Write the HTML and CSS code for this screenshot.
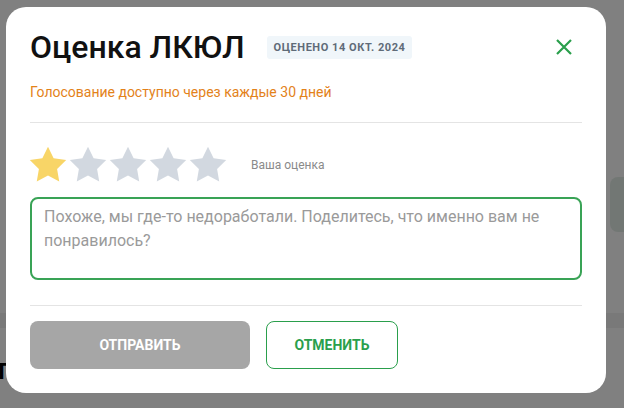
FILE: index.html
```html
<!DOCTYPE html>
<html lang="ru">
<head>
  <meta charset="UTF-8" />
  <meta name="viewport" content="width=device-width, initial-scale=1.0"/>
  <title>Оценка ЛКЮЛ</title>
  <link rel="stylesheet" href="styles.css">
</head>
<body>

  <!-- страница под оверлеем -->
  <div class="backdrop-band"></div>
  <div class="backdrop-card"></div>
  <div class="backdrop-text">т</div>

  <div class="modal">
    <div class="modal-head">
      <h1 class="modal-title">Оценка ЛКЮЛ</h1>
      <span class="badge">Оценено 14 окт. 2024</span>
      <button class="close-btn" aria-label="Закрыть">
        <svg width="18" height="18" viewBox="0 0 18 18">
          <path d="M2 2L16 16M16 2L2 16" stroke="#2a9f4c" stroke-width="2.2" fill="none"/>
        </svg>
      </button>
    </div>

    <p class="notice">Голосование доступно через каждые 30 дней</p>

    <hr class="divider">

    <div class="rating">
      <div class="stars">
        <svg class="star on" viewBox="1 1 22 22"><path d="M12 2l3.09 6.26L22 9.27l-5 4.87 1.18 6.88L12 17.77l-6.18 3.25L7 14.14 2 9.27l6.91-1.01L12 2z"/></svg>
        <svg class="star" viewBox="1 1 22 22"><path d="M12 2l3.09 6.26L22 9.27l-5 4.87 1.18 6.88L12 17.77l-6.18 3.25L7 14.14 2 9.27l6.91-1.01L12 2z"/></svg>
        <svg class="star" viewBox="1 1 22 22"><path d="M12 2l3.09 6.26L22 9.27l-5 4.87 1.18 6.88L12 17.77l-6.18 3.25L7 14.14 2 9.27l6.91-1.01L12 2z"/></svg>
        <svg class="star" viewBox="1 1 22 22"><path d="M12 2l3.09 6.26L22 9.27l-5 4.87 1.18 6.88L12 17.77l-6.18 3.25L7 14.14 2 9.27l6.91-1.01L12 2z"/></svg>
        <svg class="star" viewBox="1 1 22 22"><path d="M12 2l3.09 6.26L22 9.27l-5 4.87 1.18 6.88L12 17.77l-6.18 3.25L7 14.14 2 9.27l6.91-1.01L12 2z"/></svg>
      </div>
      <span class="rating-label">Ваша оценка</span>
    </div>

    <textarea class="comment" placeholder="Похоже, мы где-то недоработали. Поделитесь, что именно вам не понравилось?"></textarea>

    <hr class="divider bottom">

    <div class="actions">
      <button class="btn btn-send" disabled>Отправить</button>
      <button class="btn btn-cancel">Отменить</button>
    </div>
  </div>

</body>
</html>
```

FILE: styles.css
```css
body {
  margin: 0;
  height: 408px;
  overflow: hidden;
  position: relative;
  background: #808080;
  font-family: Roboto, 'Liberation Sans', sans-serif;
  padding: 7px 0 0 6px;
  box-sizing: border-box;
}

.backdrop-band {
  position: absolute;
  left: 0;
  right: 0;
  top: 313px;
  height: 15px;
  background: #797979;
}

.backdrop-card {
  position: absolute;
  left: 610px;
  top: 177px;
  width: 40px;
  height: 55px;
  border-radius: 8px;
  background: #727774;
}

.backdrop-text {
  position: absolute;
  left: -6px;
  top: 354px;
  font-size: 30px;
  line-height: 30px;
  font-weight: 500;
  color: #000;
}

.modal {
  position: relative;
  width: 600px;
  height: 386px;
  box-sizing: border-box;
  background: #fff;
  border-radius: 20px;
  padding: 20px 24px 24px;
}

.modal-head {
  display: flex;
  align-items: center;
  height: 40px;
}

.modal-title {
  margin: 0;
  font-size: 32px;
  font-weight: 500;
  color: #111;
  line-height: 40px;
}

.badge {
  margin-left: 22px;
  background: #f0f6fa;
  color: #5f6b78;
  font-size: 11px;
  font-weight: 700;
  letter-spacing: 0.55px;
  text-transform: uppercase;
  padding: 5px 7px;
  line-height: 13px;
  border-radius: 3px;
}

.close-btn {
  margin-left: auto;
  margin-right: 9px;
  background: none;
  border: none;
  padding: 0;
  width: 18px;
  height: 18px;
  cursor: pointer;
}

.notice {
  margin: 15px 0 0;
  font-size: 14px;
  line-height: 20px;
  color: #e3821a;
}

.divider {
  margin: 20px 0 0;
  border: none;
  border-top: 1px solid #e4e4e4;
}

.rating {
  display: flex;
  align-items: center;
  margin-top: 22px;
}

.stars {
  display: flex;
  margin-left: -2px;
}

.star {
  width: 40px;
  height: 40px;
  fill: #d2d8e0;
}

.star.on {
  fill: #f8d567;
}

.rating-label {
  margin-left: 23px;
  font-size: 12px;
  color: #8a8a8a;
}

.comment {
  display: block;
  margin-top: 12px;
  width: 100%;
  height: 83px;
  box-sizing: border-box;
  border: 2px solid #39a356;
  border-radius: 8px;
  padding: 6px 12px;
  font-family: Roboto, 'Liberation Sans', sans-serif;
  font-size: 16px;
  line-height: 24px;
  resize: none;
  outline: none;
}

.comment::placeholder {
  color: #9a9a9a;
}

.divider.bottom {
  margin-top: 25px;
}

.actions {
  display: flex;
  gap: 16px;
  margin-top: 15px;
}

.btn {
  height: 48px;
  border-radius: 8px;
  font-family: Roboto, 'Liberation Sans', sans-serif;
  font-size: 14px;
  font-weight: 700;
  text-transform: uppercase;
  cursor: pointer;
}

.btn-send {
  width: 220px;
  background: #a6a6a6;
  border: none;
  color: #fff;
}

.btn-cancel {
  width: 132px;
  background: #fff;
  border: 1px solid #2a9f4c;
  color: #2a9f4c;
}
```
